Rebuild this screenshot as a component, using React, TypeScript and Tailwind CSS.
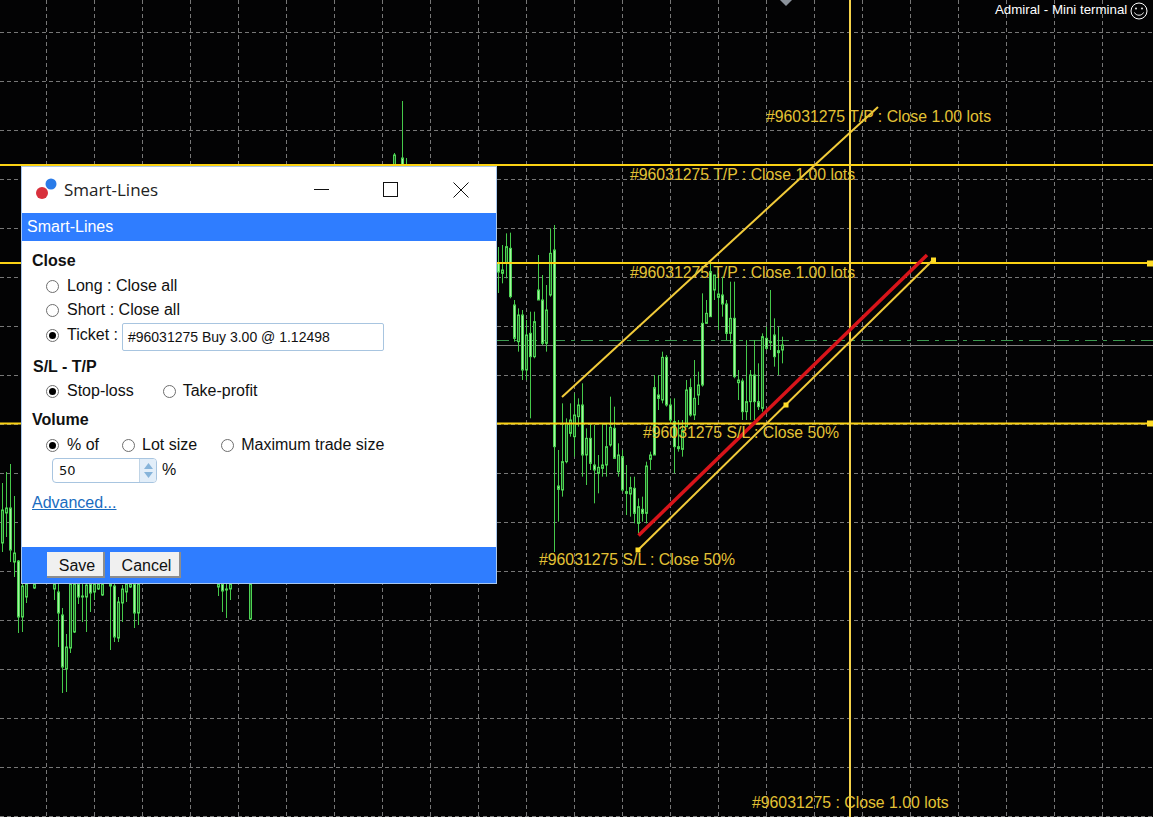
import React from "react";

// Each candle: [high, low, bodyTop, bodyBottom, bright]
type C = [number, number, number, number, number?];

// Run right of the dialog, one candle every 4px from x = 502.5. Values are in px/3 from y = 220.
const rightRun: C[] = [
  [75,190,150,160],[40,175,80,130],[38,235,85,230,1],[240,365,255,355,1],[265,395,285,365],[270,480,285,450,1],
  [300,480,345,450],[275,595,340,410,1],[275,415,305,410],[105,240,210,240,1],[165,375,240,370,1],[195,395,270,370],
  [25,230,100,225],[15,996,90,680,1],[690,905,798,808,1],[550,830,725,810],[595,730,610,725],[550,650,600,640],
  [520,710,585,650],[535,620,555,590],[490,770,555,705,1],[625,795,655,705],[610,750,655,730,1],[615,850,735,750,1],
  [705,820,742,760],[610,770,735,745],[610,770,680,735],[530,680,622,675],[560,715,625,715,1],[670,770,705,755],
  [690,815,710,810,1],[735,885,815,820,1],[770,890,803,822],[770,910,805,880,1],[835,940,860,910],[830,905,868,880,1],
  [725,910,738,880],[695,750,705,718],[465,705,503,705,1],[465,570,525,535,1],[395,550,412,540],[405,560,412,555,1],
  [535,610,555,600,1],[535,760,605,680,1],[600,695,680,686],[600,710,630,688],[480,620,510,620],[475,590,503,585,1],
  [420,600,535,585],[455,555,495,525],[220,500,310,495,1],[240,310,280,310],[130,290,155,290,1],[165,240,165,210],
  [160,330,222,232],[170,290,225,252,1],[240,360,252,340,1],[185,370,295,340],[185,475,295,470,1],[450,540,480,488],
  [475,600,483,575,1],[360,600,545,575],[450,600,465,545],[360,600,465,545,1],[430,570,545,560,1],[340,575,350,565],
  [320,390,355,385,1],[210,390,365,368],[295,440,345,410,1],[320,465,392,398],[350,430,375,390],
];

// Candles left of and under the dialog, in screen px: [x, high, low, bodyTop, bodyBottom, bright]
const otherRun: [number, ...C][] = [
  [2.5,483,552,510,543],[6.5,472,537,508,513],[10.5,464,562,508,550,1],[14.5,496,577,553,562],[18.5,560,633,561,617,1],
  [22.5,575,632,586,617],[26.5,584,603,584,597],[34.5,584,589,584,588],[54.5,584,600,584,589],[58.5,584,647,592,613,1],
  [62.5,608,693,615,667,1],[66.5,634,692,647,669],[70.5,584,653,584,648],[74.5,584,633,584,632],[78.5,584,604,584,597,1],
  [82.5,584,622,596,597],[86.5,584,632,585,597],[90.5,584,612,584,593,1],[94.5,584,600,584,592],[98.5,584,590,584,589],
  [102.5,584,596,584,595],[110.5,584,650,584,586],[114.5,584,642,586,637,1],[118.5,597,642,602,638],[122.5,585,622,589,603],
  [126.5,584,602,584,592],[130.5,584,588,584,587],[134.5,584,628,584,613,1],[138.5,584,625,584,613],[218.5,584,596,584,587],
  [222.5,584,612,584,591,1],[226.5,584,618,589,590],[230.5,584,600,584,589],[250.5,584,620,584,619],
  [394.5,153,166,155,166],[402.5,101,166,158,166,1],[406.5,158,166,165,166],[498.5,247,293,263,272,1],
];

const allCandles: [number, ...C][] = [
  ...otherRun,
  ...rightRun.map(([h, l, t, b, s], i): [number, ...C] => [
    502.5 + 4 * i,
    220 + h / 3,
    220 + l / 3,
    220 + t / 3,
    220 + b / 3,
    s,
  ]),
];

const vGrid = Array.from({ length: 23 }, (_, i) => 46.5 + 48 * i);
const hGrid = Array.from({ length: 17 }, (_, i) => 32.5 + 49 * i);

function Chart() {
  return (
    <svg className="absolute inset-0" width={1153} height={817} viewBox="0 0 1153 817">
      <g stroke="#777777" strokeWidth="1" strokeDasharray="4 3">
        {vGrid.map((x) => (
          <line key={x} x1={x} y1={0} x2={x} y2={817} />
        ))}
        {hGrid.map((y) => (
          <line key={y} x1={0} y1={y} x2={1153} y2={y} />
        ))}
      </g>
      <line x1={497} y1={340.5} x2={1153} y2={340.5} stroke="#3c9a50" strokeWidth="1" strokeDasharray="12 6 4 6" />
      <line x1={497} y1={345.5} x2={1153} y2={345.5} stroke="#808080" strokeWidth="1" />
      {allCandles.map(([x, h, l, t, b, s]) => (
        <g key={x}>
          <line x1={x} y1={h} x2={x} y2={l} stroke="#45c94a" strokeWidth="1" />
          <rect
            x={x - 1}
            y={t}
            width={2}
            height={Math.max(b - t, 1)}
            fill={s ? "#a6f7a0" : "#1c5c20"}
            stroke="#4fd455"
            strokeWidth="1"
          />
        </g>
      ))}
      <g fill="#fbd214">
        <rect x={0} y={164} width={1153} height={2} />
        <rect x={0} y={262} width={1153} height={2} />
        <rect x={0} y={422.5} width={1153} height={2} />
        <rect x={849} y={0} width={2} height={817} fill="#f6d34a" />
      </g>
      <line x1={562} y1={397} x2={878} y2={107} stroke="#f2cb3a" strokeWidth="2" />
      <line x1={638} y1={550} x2={933} y2={260} stroke="#f2cb3a" strokeWidth="2" />
      <line x1={638.5} y1={535.5} x2={927} y2={255} stroke="#d8141a" strokeWidth="3.5" />
      <g fill="#ffdc28">
        <rect x={635.5} y={547.5} width={5} height={5} />
        <rect x={783.5} y={402.5} width={5} height={5} />
        <rect x={931} y={257.5} width={5} height={5} />
        <rect x={1147} y={260.5} width={6} height={6} />
        <rect x={1147} y={420.5} width={6} height={6} />
      </g>
      <polygon points="780,0 792,0 786,6" fill="#8b929b" />
      <g fill="none" stroke="#fff" strokeWidth="1">
        <circle cx={1139} cy={11} r={8} />
        <path d="M1134.5 12.5c1.5 3.6 7.5 3.6 9 0" />
      </g>
      <circle cx={1136} cy={8.5} r={0.9} fill="#fff" />
      <circle cx={1142} cy={8.5} r={0.9} fill="#fff" />
    </svg>
  );
}

const labelClass =
  "absolute whitespace-nowrap text-[15.8px] leading-[18px] text-[#e3c235] font-['Liberation_Sans',Arial,sans-serif]";

function Radio({ on }: { on?: boolean }) {
  return (
    <span className="flex h-[13px] w-[13px] shrink-0 items-center justify-center rounded-full border border-[#6e6e6e] bg-white">
      {on && <span className="h-[7px] w-[7px] rounded-full bg-black" />}
    </span>
  );
}

function Choice({ on, label, className = "gap-[8px]" }: { on?: boolean; label: string; className?: string }) {
  return (
    <span className={"flex items-center " + className}>
      <Radio on={on} />
      <span>{label}</span>
    </span>
  );
}

function Dialog() {
  return (
    <div className="absolute left-[21px] top-[166px] flex h-[418px] w-[476px] flex-col border border-[#a9c8ee] bg-white font-['Liberation_Sans',Arial,sans-serif] text-[16px] leading-[18px] text-[#111]">
      <div className="flex h-[46px] shrink-0 items-center">
        <svg width="28" height="26" viewBox="0 0 28 26" className="ml-[13px] shrink-0">
          <circle cx="16" cy="7" r="5.5" fill="#2a7be8" />
          <circle cx="7" cy="16" r="6" fill="#d8303c" />
        </svg>
        <span className="ml-[1px] font-['Open_Sans',sans-serif] text-[17px] text-[#222]">Smart-Lines</span>
        <div className="ml-auto flex items-center">
          <svg width="16" height="16" viewBox="0 0 16 16" className="mr-[53px]">
            <line x1="0" y1="7.5" x2="15" y2="7.5" stroke="#111" />
          </svg>
          <svg width="16" height="16" viewBox="0 0 16 16" className="mr-[54px]">
            <rect x="0.5" y="0.5" width="14" height="14" fill="none" stroke="#111" />
          </svg>
          <svg width="16" height="16" viewBox="0 0 16 16" className="mr-[27px]">
            <path d="M0.5 0.5 15.5 15.5M15.5 0.5 0.5 15.5" stroke="#111" fill="none" />
          </svg>
        </div>
      </div>
      <div className="flex h-[28px] shrink-0 items-center bg-[#2f7dff] pl-[5px] text-white">Smart-Lines</div>

      <div className="flex flex-1 flex-col pl-[10px]">
        <div className="mt-[11px] font-bold">Close</div>
        <div className="ml-[14px] mt-[4px] flex flex-col">
          <Choice label="Long : Close all" className="h-[24px] gap-[8px]" />
          <Choice label="Short : Close all" className="h-[24px] gap-[8px]" />
          <div className="flex h-[26px] items-center">
            <Choice on label="Ticket :" />
            <div className="ml-[4px] mt-[4px] flex h-[28px] w-[262px] shrink-0 items-center rounded-[2px] border border-[#a8c5e0] pl-[5px] text-[14px]">
              #96031275 Buy 3.00 @ 1.12498
            </div>
          </div>
        </div>
        <div className="ml-[1px] mt-[10px] font-bold">S/L - T/P</div>
        <div className="ml-[14px] mt-[3px] flex h-[24px] items-center">
          <Choice on label="Stop-loss" />
          <Choice label="Take-profit" className="ml-[29px] gap-[7px]" />
        </div>
        <div className="mt-[8px] font-bold">Volume</div>
        <div className="ml-[14px] mt-[4px] flex h-[24px] items-center">
          <Choice on label="% of" />
          <Choice label="Lot size" className="ml-[23px] gap-[7px]" />
          <Choice label="Maximum trade size" className="ml-[24px] gap-[7px]" />
        </div>
        <div className="ml-[20px] mt-[1px] flex items-center">
          <div className="flex h-[25px] w-[105px] items-stretch overflow-hidden rounded-[4px] border border-[#a8c5e0]">
            <span className="flex flex-1 items-center pl-[6px] font-['DejaVu_Sans',sans-serif] text-[13px]">50</span>
            <span className="flex w-[17px] flex-col items-center justify-center gap-[3px] border-l border-[#c0d4e6] bg-[#e2eef9]">
              <svg width="9" height="6" viewBox="0 0 9 6">
                <polygon points="4.5,0 9,6 0,6" fill="#86b4da" />
              </svg>
              <svg width="9" height="6" viewBox="0 0 9 6">
                <polygon points="0,0 9,0 4.5,6" fill="#86b4da" />
              </svg>
            </span>
          </div>
          <span className="ml-[5px] -translate-y-[1px]">%</span>
        </div>
        <a className="mt-[11px] w-fit text-[#1a6cc0] underline">Advanced...</a>
      </div>

      <div className="flex h-[36px] shrink-0 items-start gap-[5px] bg-[#2f7dff] pl-[25px] pt-[5px]">
        <span className="flex h-[26px] w-[58px] items-center justify-center border-b-2 border-r-2 border-[#8d8d8d] bg-[#f0f0f0] pl-[4px] pt-[3px]">Save</span>
        <span className="flex h-[26px] w-[71px] items-center justify-center border-b-2 border-r-2 border-[#8d8d8d] bg-[#f0f0f0] pl-[4px] pt-[3px]">Cancel</span>
      </div>
    </div>
  );
}

export default function App() {
  return (
    <div className="relative h-[817px] w-[1153px] overflow-hidden bg-[#030304]">
      <Chart />
      <span className={labelClass + " left-[766px] top-[108px]"}>#96031275 T/P : Close 1.00 lots</span>
      <span className={labelClass + " left-[630px] top-[166px]"}>#96031275 T/P : Close 1.00 lots</span>
      <span className={labelClass + " left-[630px] top-[264px]"}>#96031275 T/P : Close 1.00 lots</span>
      <span className={labelClass + " left-[643px] top-[424px]"}>#96031275 S/L : Close 50%</span>
      <span className={labelClass + " left-[539px] top-[551px]"}>#96031275 S/L : Close 50%</span>
      <span className={labelClass + " left-[752px] top-[794px]"}>#96031275 : Close 1.00 lots</span>
      <span className="absolute left-[995px] top-[2px] whitespace-nowrap font-['Liberation_Sans',Arial,sans-serif] text-[13.3px] leading-[16px] text-white">
        Admiral - Mini terminal
      </span>
      <Dialog />
    </div>
  );
}
